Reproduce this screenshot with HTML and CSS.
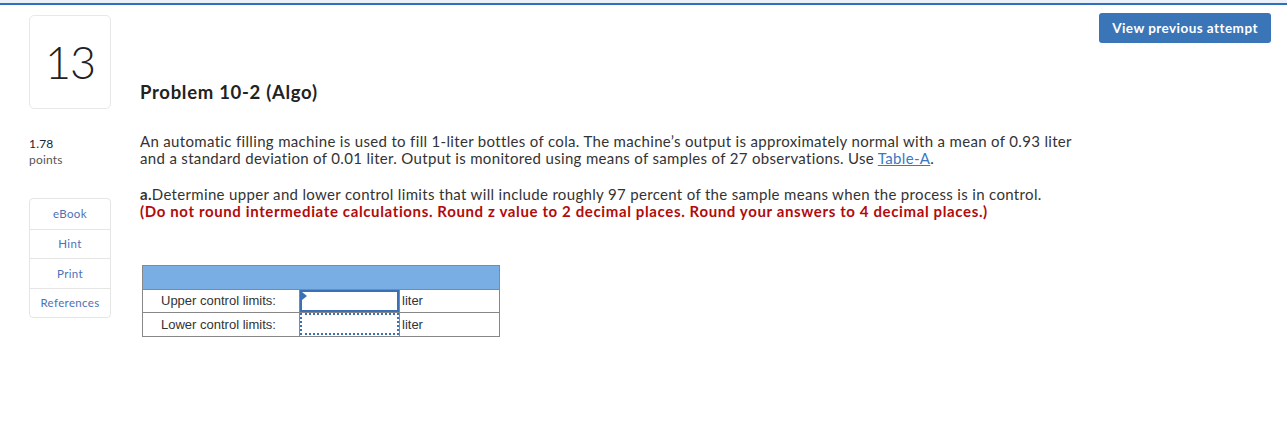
FILE: index.html
```html
<!DOCTYPE html>
<html>
<head>
<meta charset="utf-8">
<link rel="stylesheet" href="styles.css">
</head>
<body>
<div class="topbar"></div>
<div class="page">
  <div class="side">
    <div class="numcard">13</div>
    <div class="points">
      <div class="pval">1.78</div>
      <div class="plabel">points</div>
    </div>
    <div class="tools">
      <div class="tool">eBook</div>
      <div class="tool">Hint</div>
      <div class="tool">Print</div>
      <div class="tool">References</div>
    </div>
  </div>
  <div class="main">
    <h1 class="title">Problem 10-2 (Algo)</h1>
    <p class="para">An automatic filling machine is used to fill 1-liter bottles of cola. The machine’s output is approximately normal with a mean of 0.93 liter<br>and a standard deviation of 0.01 liter. Output is monitored using means of samples of 27 observations. Use <a class="link" href="#">Table-A</a>.</p>
    <p class="para"><b>a.</b>Determine upper and lower control limits that will include roughly 97 percent of the sample means when the process is in control.<br><span class="red">(Do not round intermediate calculations. Round z value to 2 decimal places. Round your answers to 4 decimal places.)</span></p>
    <table class="ans">
      <tr class="head"><td colspan="3"></td></tr>
      <tr>
        <td class="lab">Upper control limits:</td>
        <td class="inp"><div class="box active"><span class="flag"></span></div></td>
        <td class="unit">liter</td>
      </tr>
      <tr>
        <td class="lab">Lower control limits:</td>
        <td class="inp"><div class="box dotted"></div></td>
        <td class="unit">liter</td>
      </tr>
    </table>
  </div>
  <div class="right">
    <button class="btn">View previous attempt</button>
  </div>
</div>
</body>
</html>
```
FILE: styles.css
```css
* { box-sizing: border-box; }
html, body { margin: 0; padding: 0; background: #fff; }
body { font-family: Lato, "Liberation Sans", sans-serif; color: #333; }
.topbar { height: 5px; background: #eaf1f9; border-bottom: 2px solid #2f6fbf; }
.page { display: flex; padding: 0 16px 0 29px; }
.side { width: 82px; display: flex; flex-direction: column; padding-top: 10px; }
.numcard {
  width: 82px; height: 94px; border: 1px solid #e8e8e8; border-radius: 5px;
  display: flex; align-items: center; justify-content: center;
  font-size: 45px; color: #222; font-weight: 300; letter-spacing: -1px;
}
.points { margin-top: 27px; font-size: 12px; line-height: 16px; letter-spacing: 0.2px; }
.pval { color: #223; }
.plabel { color: #555; }
.tools {
  margin-top: 30px; border: 1px solid #e5e5e5; border-radius: 4px; width: 82px;
}
.tool {
  height: 29.5px; display: flex; align-items: center; justify-content: center;
  font-size: 11.5px; letter-spacing: 0.35px; color: #4a72b8; border-top: 1px solid #e5e5e5;
}
.tool:first-child { border-top: none; }
.main { flex: 1; padding-left: 29px; }
.title { margin: 76px 0 0; font-size: 18.5px; letter-spacing: 0.7px; font-weight: 700; color: #222; line-height: 22px; }
.para { margin: 30px 0 0; font-size: 15px; letter-spacing: 0.33px; line-height: 17px; color: #333; }
.para + .para { margin-top: 19px; }
.para b { font-weight: 700; letter-spacing: 0.3px; }
.link { color: #3a78c2; text-decoration: underline; }
.red { color: #b10b0b; font-weight: 700; letter-spacing: 0.63px; }
.ans {
  margin: 45px 0 0 2px; border-collapse: collapse; width: 358px;
  font-family: "Liberation Sans", Arial, sans-serif; font-size: 13px; letter-spacing: 0;
}
.ans td { border: 1px solid #888; padding: 0; height: 23.5px; }
.head td { background: #78aee3; height: 23.5px; }
.lab { width: 157px; padding-left: 18px !important; color: #333; }
.inp { width: 100px; }
.unit { padding-left: 2px !important; color: #333; }
.box { position: relative; height: 22px; width: 100%; }
.box.active { border: 2px solid #3a70b5; }
.box.dotted { border: 2px dotted #3a70b5; }
.flag {
  position: absolute; left: 0; top: 0; width: 0; height: 0;
  border-top: 4px solid transparent; border-bottom: 4px solid transparent;
  border-left: 5px solid #3a70b5;
}
.right { padding-top: 8px; }
.btn {
  background: #3a75b8; color: #fff; border: none; border-radius: 3px;
  width: 172px; height: 30px; font-family: Lato, sans-serif;
  font-size: 13.5px; letter-spacing: 0.45px; font-weight: 700; padding: 0;
}
```
